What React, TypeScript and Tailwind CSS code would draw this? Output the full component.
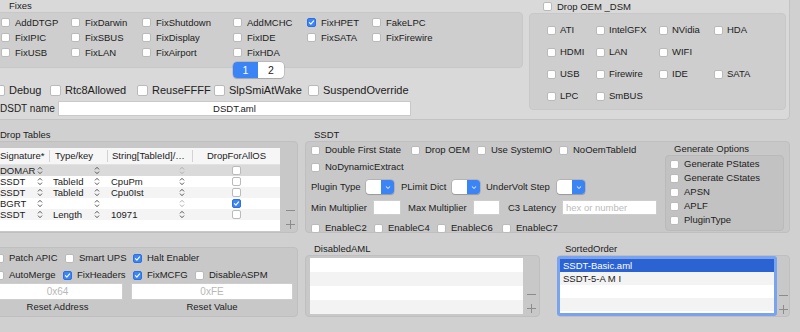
import React from "react";

type CheckProps = { on?: boolean; big?: boolean };

const Check = ({ on = false, big = false }: CheckProps) => (
  <span
    className={`flex shrink-0 items-center justify-center rounded-[2px] border ${
      big ? "size-[11px]" : "size-[9px]"
    } ${on ? "border-[#2d6fe0] bg-[#3a86f7]" : "border-[#bababa] bg-white"}`}
  >
    {on && (
      <svg viewBox="0 0 10 10" className="size-[7px]">
        <path
          d="M2 5.3 4.1 7.4 8 2.6"
          fill="none"
          stroke="white"
          strokeWidth="1.6"
          strokeLinecap="round"
          strokeLinejoin="round"
        />
      </svg>
    )}
  </span>
);

type OptProps = { label: string; on?: boolean; big?: boolean; w?: string; gap?: string };

const Opt = ({ label, on, big, w = "", gap = "gap-[5px]" }: OptProps) => (
  <div className={`flex shrink-0 items-center ${gap} ${w}`}>
    <Check on={on} big={big} />
    <span className="whitespace-nowrap">{label}</span>
  </div>
);

const Stepper = ({ dim = false }: { dim?: boolean }) => (
  <svg viewBox="0 0 6 9" className="h-[9px] w-[6px] shrink-0">
    <path
      d="M1 3.4 3 1.3 5 3.4M1 5.6 3 7.7 5 5.6"
      fill="none"
      stroke={dim ? "#b0b0b0" : "#555"}
      strokeWidth="1"
    />
  </svg>
);

const Popup = () => (
  <div className="flex h-[14px] w-[28px] shrink-0 overflow-hidden rounded-[3px] bg-white shadow-[0_0_0_0.5px_rgba(0,0,0,0.2),0_1px_1px_rgba(0,0,0,0.15)]">
    <div className="flex-1" />
    <div className="flex w-[13px] items-center justify-center bg-[#3b84f5]">
      <svg viewBox="0 0 8 6" className="h-[5px] w-[6px]">
        <path d="M1.2 1.6 4 4.3 6.8 1.6" fill="none" stroke="white" strokeWidth="1.3" />
      </svg>
    </div>
  </div>
);

const MinusPlus = ({ top }: { top: string }) => (
  <div className={`flex flex-col items-center ${top}`}>
    <svg viewBox="0 0 9 9" className="size-[9px]">
      <path d="M0 4.5h9" stroke="#8c8c8c" strokeWidth="1" />
    </svg>
    <svg viewBox="0 0 9 9" className="mt-[5px] size-[9px]">
      <path d="M0 4.5h9M4.5 0v9" stroke="#8c8c8c" strokeWidth="1" />
    </svg>
  </div>
);

const fixes = [
  [["AddDTGP"], ["FixDarwin"], ["FixShutdown"], ["AddMCHC"], ["FixHPET", "on"], ["FakeLPC"]],
  [["FixIPIC"], ["FixSBUS"], ["FixDisplay"], ["FixIDE"], ["FixSATA"], ["FixFirewire"]],
  [["FixUSB"], ["FixLAN"], ["FixAirport"], ["FixHDA"]],
];
const fixW = ["w-[70px]", "w-[71px]", "w-[91px]", "w-[74px]", "w-[65px]", "w-[70px]"];

const dsm = [
  ["ATI", "IntelGFX", "NVidia", "HDA"],
  ["HDMI", "LAN", "WIFI"],
  ["USB", "Firewire", "IDE", "SATA"],
  ["LPC", "SmBUS"],
];
const dsmW = ["w-[49px]", "w-[63px]", "w-[55px]", "w-[60px]"];

const drops = [
  { sig: "DOMAR", type: "", str: "", on: false, sel: true, dim: true },
  { sig: "SSDT", type: "TableId", str: "CpuPm", on: false },
  { sig: "SSDT", type: "TableId", str: "Cpu0Ist", on: false },
  { sig: "BGRT", type: "", str: "", on: true, dim: true },
  { sig: "SSDT", type: "Length", str: "10971", on: false },
];

const rowBg = (i: number) => (i % 2 === 1 ? "bg-[#f3f3f3]" : "bg-white");

export default function App() {
  return (
    <div className="h-[332px] w-[800px] overflow-hidden bg-[#d0d0d0] font-['Liberation_Sans',Arial,sans-serif] text-[9.5px] leading-none text-[#212121]">
      <div className="-ml-[12px] w-[812px]">
        {/* top panel */}
        <div className="flex h-[120px] w-[802px] rounded-br-[5px] border-b border-r border-[#c3c3c3] bg-[#d9d9d9]">
          <div className="ml-[2px] w-[533px]">
            <div className="h-[12px] pl-[19px] leading-[12px]">Fixes</div>
            <div className="h-[56px] rounded-[4px] border border-[#c8c8c8] bg-[#cecece] pl-[10px] pt-[2px]">
              {fixes.map((row, r) => (
                <div key={r} className="flex h-[15px] items-center">
                  {row.map(([label, on], c) => (
                    <Opt key={label} label={label} on={on === "on"} w={fixW[c]} />
                  ))}
                </div>
              ))}
            </div>
            <div className="-mt-[6px] ml-[243px] flex h-[16px] w-[51px] overflow-hidden rounded-[4px] bg-white text-[10.5px] shadow-[0_0_0_0.5px_rgba(0,0,0,0.2),0_1px_1px_rgba(0,0,0,0.15)]">
              <div className="flex w-[25px] items-center justify-center bg-[#3a84f6] text-white">1</div>
              <div className="flex flex-1 items-center justify-center">2</div>
            </div>
            <div className="mt-[5px] flex h-[14px] items-center pl-[4px] text-[11px]">
              <Opt label="Debug" big w="w-[56px]" gap="gap-[4px]" />
              <Opt label="Rtc8Allowed" big w="w-[87px]" gap="gap-[4px]" />
              <Opt label="ReuseFFFF" big w="w-[77px]" gap="gap-[4px]" />
              <Opt label="SlpSmiAtWake" big w="w-[94px]" gap="gap-[4px]" />
              <Opt label="SuspendOverride" big gap="gap-[4px]" />
            </div>
            <div className="mt-[4px] flex h-[15px] items-center">
              <div className="w-[68px] whitespace-nowrap pl-[10px] text-[10px]">DSDT name</div>
              <div className="flex h-[15px] w-[353px] items-center justify-center border border-[#c9c9c9] bg-white">
                DSDT.aml
              </div>
            </div>
          </div>

          <div className="ml-[6px] w-[257px]">
            <div className="flex h-[13px] items-center pl-[14px]">
              <Opt label="Drop OEM _DSM" />
            </div>
            <div className="h-[97px] rounded-[4px] border border-[#c8c8c8] bg-[#cecece] pl-[17px] pt-[5px]">
              {dsm.map((row, r) => (
                <div key={r} className="flex h-[22px] items-center">
                  {row.map((label, c) => (
                    <Opt key={label} label={label} w={dsmW[c]} gap="gap-[4px]" />
                  ))}
                </div>
              ))}
            </div>
          </div>
        </div>

        {/* lower section */}
        <div className="ml-[2px] flex gap-[7px]">
          <div className="w-[308px]">
            <div className="mt-[9px] h-[12px] pl-[10px] leading-[12px]">Drop Tables</div>
            <div className="flex h-[92px] rounded-[4px] border border-[#bfbfbf] bg-[#c8c8c8] pl-[3px] pt-[6px]">
              <div className="h-[83px] w-[286px] bg-white">
                <div className="flex h-[17px] border-b border-[#e2e2e2] bg-[#f6f6f6]">
                  <div className="flex w-[56px] items-center justify-between pl-[6px]">
                    <span>Signature*</span>
                    <span className="h-[12px] w-px bg-[#d3d3d3]" />
                  </div>
                  <div className="flex w-[58px] items-center justify-between pl-[5px]">
                    <span>Type/key</span>
                    <span className="h-[12px] w-px bg-[#d3d3d3]" />
                  </div>
                  <div className="flex w-[85px] items-center justify-between pl-[4px]">
                    <span className="whitespace-nowrap">String[TableId]/…</span>
                    <span className="h-[12px] w-px bg-[#d3d3d3]" />
                  </div>
                  <div className="flex w-[87px] items-center justify-center">DropForAllOS</div>
                </div>
                {drops.map((d, i) => (
                  <div
                    key={i}
                    className={`flex h-[11px] ${d.sel ? "bg-[#dadada]" : i % 2 === 0 ? "bg-[#f4f4f4]" : "bg-white"}`}
                  >
                    <div className="flex w-[56px] items-center justify-between pl-[6px] pr-[7px]">
                      <span>{d.sig}</span>
                      <Stepper />
                    </div>
                    <div className="flex w-[58px] items-center justify-between pl-[3px] pr-[8px]">
                      <span>{d.type}</span>
                      <Stepper />
                    </div>
                    <div className="flex w-[85px] items-center justify-between pl-[3px] pr-[8px]">
                      <span>{d.str}</span>
                      <Stepper dim={d.dim} />
                    </div>
                    <div className="flex w-[87px] items-center justify-center">
                      <Check on={d.on} />
                    </div>
                  </div>
                ))}
              </div>
              <div className="ml-[6px]">
                <MinusPlus top="mt-[58px]" />
              </div>
            </div>

            <div className="mt-[14px] h-[70px] rounded-[4px] border border-[#bfbfbf] bg-[#c8c8c8] pl-[4px] pt-[3px]">
              <div className="flex h-[14px] items-center">
                <Opt label="Patch APIC" w="w-[70px]" />
                <Opt label="Smart UPS" w="w-[68px]" />
                <Opt label="Halt Enabler" on />
              </div>
              <div className="mt-[3px] flex h-[14px] items-center">
                <Opt label="AutoMerge" w="w-[68px]" />
                <Opt label="FixHeaders" on w="w-[70px]" />
                <Opt label="FixMCFG" on w="w-[62px]" />
                <Opt label="DisableASPM" />
              </div>
              <div className="-ml-[3px] mt-[1px] flex h-[17px] gap-[8px] text-[10px] text-[#b8b8b8]">
                <div className="flex w-[131px] items-center justify-center border border-[#cdcdcd] bg-white">0x64</div>
                <div className="flex w-[162px] items-center justify-center border border-[#cdcdcd] bg-white">0xFE</div>
              </div>
              <div className="-ml-[3px] mt-[1px] flex h-[12px] gap-[8px] leading-[12px]">
                <div className="w-[131px] text-center">Reset Address</div>
                <div className="w-[162px] text-center">Reset Value</div>
              </div>
            </div>
          </div>

          <div className="w-[485px]">
            <div className="mt-[9px] h-[12px] pl-[9px] leading-[12px]">SSDT</div>
            <div className="flex h-[92px] rounded-[4px] border border-[#bfbfbf] bg-[#c8c8c8]">
              <div className="w-[359px] pl-[5px] pt-[1px]">
                <div className="flex h-[14px] items-center">
                  <Opt label="Double First State" w="w-[100px]" />
                  <Opt label="Drop OEM" w="w-[66px]" />
                  <Opt label="Use SystemIO" w="w-[82px]" />
                  <Opt label="NoOemTableId" />
                </div>
                <div className="mt-[3px] flex h-[14px] items-center">
                  <Opt label="NoDynamicExtract" />
                </div>
                <div className="mt-[6px] flex h-[14px] items-center">
                  <div className="w-[55px] shrink-0">Plugin Type</div>
                  <Popup />
                  <div className="w-[58px] shrink-0 pl-[7px]">PLimit Dict</div>
                  <Popup />
                  <div className="w-[77px] shrink-0 whitespace-nowrap pl-[6px]">UnderVolt Step</div>
                  <Popup />
                </div>
                <div className="mt-[6px] flex h-[15px] items-center">
                  <div className="w-[62px] shrink-0 whitespace-nowrap">Min Multiplier</div>
                  <div className="h-[15px] w-[28px] shrink-0 border border-[#cdcdcd] bg-white" />
                  <div className="w-[72px] shrink-0 whitespace-nowrap pl-[7px]">Max Multiplier</div>
                  <div className="h-[15px] w-[27px] shrink-0 border border-[#cdcdcd] bg-white" />
                  <div className="w-[62px] shrink-0 whitespace-nowrap pl-[8px]">C3 Latency</div>
                  <div className="flex h-[15px] w-[95px] shrink-0 items-center border border-[#cdcdcd] bg-white pl-[3px] text-[#bcbcbc]">
                    hex or number
                  </div>
                </div>
                <div className="mt-[6px] flex h-[14px] items-center">
                  <Opt label="EnableC2" w="w-[63px]" />
                  <Opt label="EnableC4" w="w-[63px]" />
                  <Opt label="EnableC6" w="w-[65px]" />
                  <Opt label="EnableC7" />
                </div>
              </div>
              <div className="ml-auto mr-[5px] w-[119px] pt-[1px]">
                <div className="h-[12px] whitespace-nowrap pl-[9px] leading-[12px]">Generate Options</div>
                <div className="h-[76px] rounded-[4px] border border-[#bababa] bg-[#c2c2c2] pl-[4px] pt-[1px]">
                  {["Generate PStates", "Generate CStates", "APSN", "APLF", "PluginType"].map((l) => (
                    <div key={l} className="flex h-[14px] items-center">
                      <Opt label={l} />
                    </div>
                  ))}
                </div>
              </div>
            </div>

            <div className="mt-[10px] flex">
              <div className="w-[235px]">
                <div className="h-[12px] pl-[9px] leading-[12px]">DisabledAML</div>
                <div className="flex h-[62px] rounded-[4px] border border-[#bfbfbf] bg-[#c8c8c8] pl-[4px] pt-[2px]">
                  <div className="h-[56px] w-[214px] bg-white">
                    {[0, 1, 2, 3].map((i) => (
                      <div key={i} className={`h-[14px] ${rowBg(i)}`} />
                    ))}
                  </div>
                  <div className="w-[16px]">
                    <MinusPlus top="mt-[32px]" />
                  </div>
                </div>
              </div>
              <div className="ml-[17px] w-[233px]">
                <div className="h-[12px] pl-[8px] leading-[12px]">SortedOrder</div>
                <div className="flex h-[62px] rounded-[4px] border border-[#bfbfbf] bg-[#c8c8c8]">
                  <div className="-ml-px h-[60px] w-[220px] rounded-[3px] border-[3px] border-[#79a2ef] bg-white">
                    <div className="flex h-[13px] items-center bg-[#2c63d3] pl-[3px] text-white">SSDT-Basic.aml</div>
                    <div className="flex h-[13px] items-center bg-[#f3f3f3] pl-[3px]">SSDT-5-A M I</div>
                    <div className="h-[13px] bg-white" />
                    <div className="h-[13px] bg-[#f3f3f3]" />
                  </div>
                  <div className="w-[12px]">
                    <MinusPlus top="mt-[35px]" />
                  </div>
                </div>
              </div>
            </div>
          </div>
        </div>
      </div>
    </div>
  );
}
